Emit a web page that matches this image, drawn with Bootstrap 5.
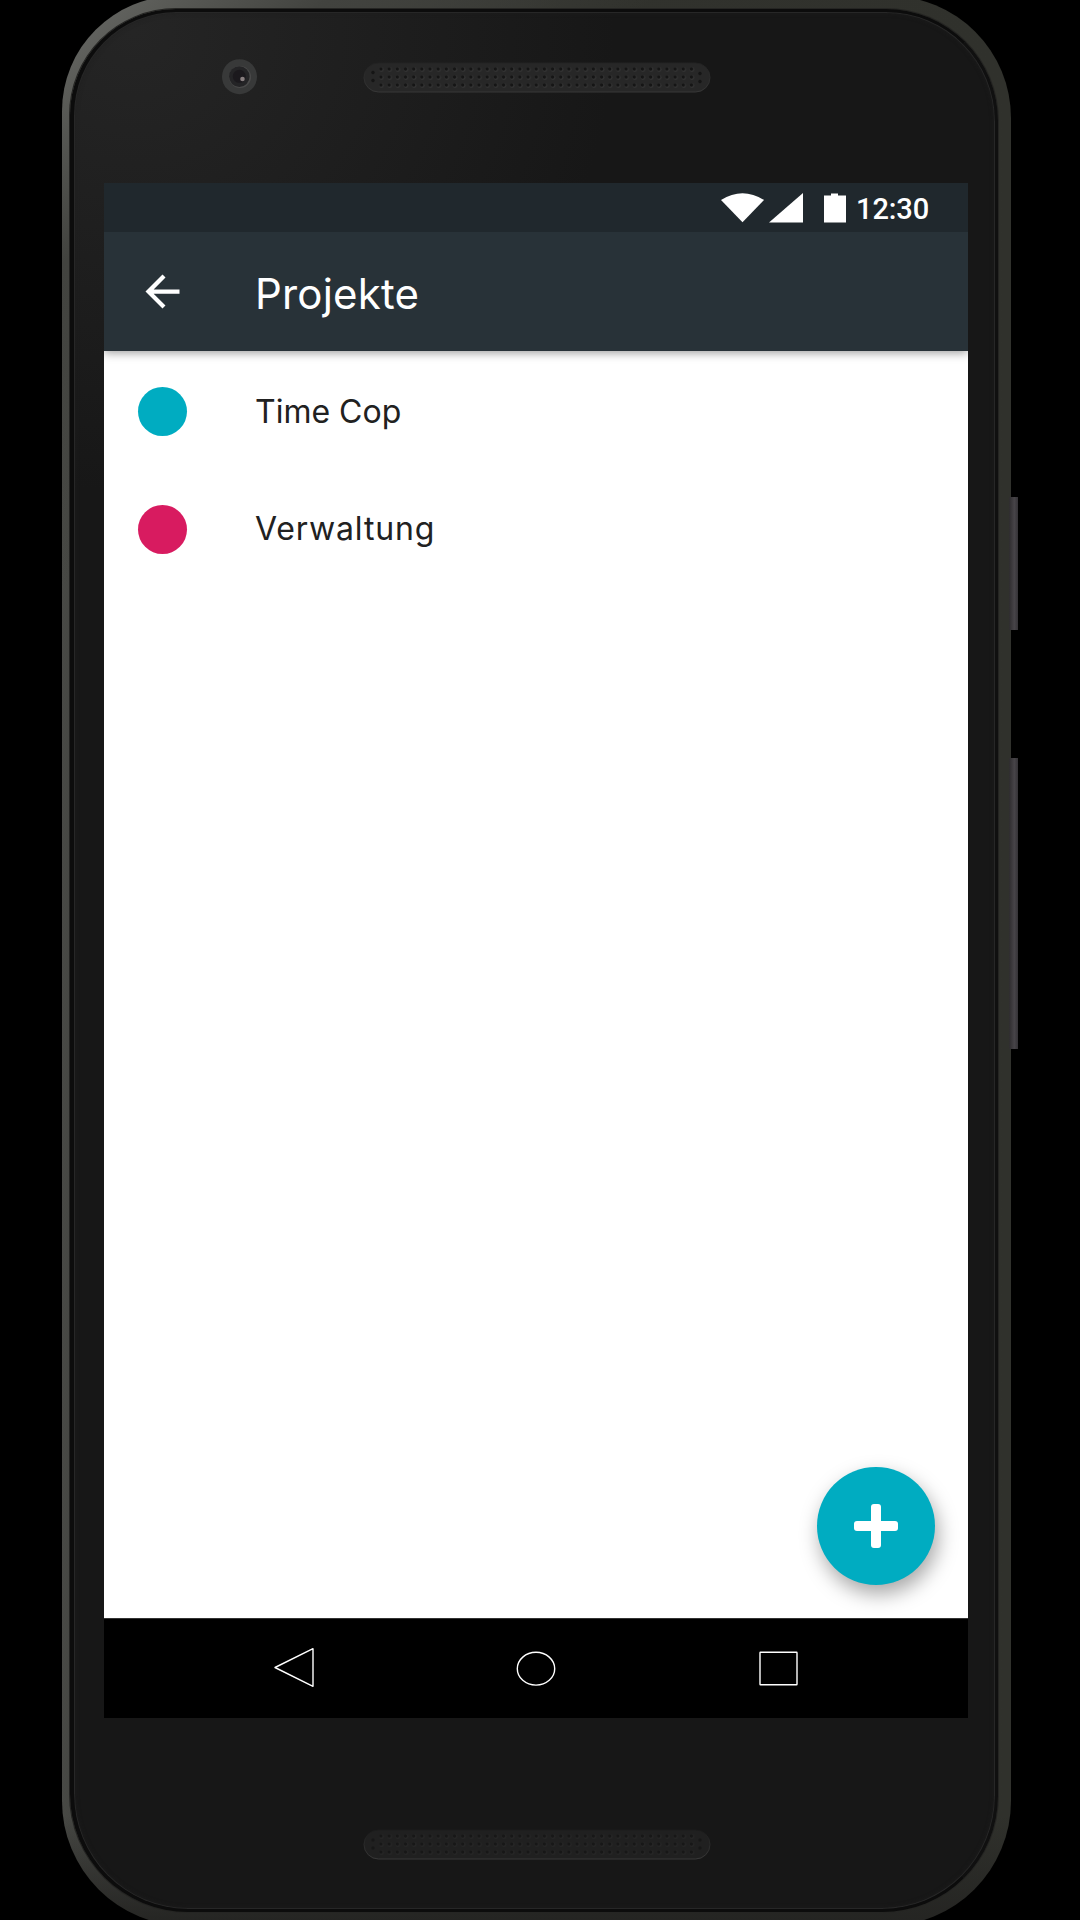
<!DOCTYPE html>
<html lang="de">
<head>
<meta charset="utf-8">
<meta name="viewport" content="width=device-width, initial-scale=1">
<title>Projekte</title>
<link href="https://cdn.jsdelivr.net/npm/bootstrap@5.3.0/dist/css/bootstrap.min.css" rel="stylesheet">
<style>
  body { background: #000; font-family: Inter, "Open Sans", sans-serif; }
  .stage { width: 1080px; height: 1920px; background: #000; }
  .phone {
    width: 949px; height: 1930px; margin: -4px 0 0 62px; padding: 13px 13px 14px 8px;
    border-radius: 115px 122px 125px 125px;
    background: linear-gradient(135deg, #6b6c69 0, #5a5b57 75px, #42433f 190px, rgba(66,67,63,0) 420px),
      linear-gradient(to top, #242422 0, rgba(50,50,48,0) 110px),
      linear-gradient(90deg, #484945 0, #464743 8px, #31322d 500px, #30312c 100%);
  }
  .bezel {
    border: 3px solid #0c0c0c; border-right-color: #101010; border-width: 3px 3px 3px 4px;
    border-radius: 106px 112px 116px 118px;
    background: radial-gradient(ellipse 480px 460px at 60px 20px, #252525, #171717);
    box-shadow: inset 0 0 0 1px #272727, inset 0 0 5px #1f1f1f, 0 0 0 1px #252523;
    padding: 171px 26px 0 30px;
  }
  .hwkey { left: 1009px; width: 9px; background: linear-gradient(90deg, #2e2c2e, #474448 60%, #343236); }
  .key-power { top: 497px; height: 133px; }
  .key-volume { top: 758px; height: 291px; }
  .camera { left: 222px; top: 59px; }
  .grille { left: 363px; }
  .grille-top { top: 62px; }
  .grille-bottom { top: 1829px; }
  .screen { width: 864px; height: 1535px; background: #fff; }
  .statusbar { height: 49px; background: #20282d; padding: 0 40px 0 616px; color: #fff; z-index: 2; }
  .clock { font: 500 29px/49px Roboto, sans-serif; width: 72px; letter-spacing: -.1px; margin-left: 8px; padding-top: 4px; }
  .appbar { height: 119px; background: #283238; color: #fff; box-shadow: 0 2px 9px rgba(0,0,0,.38); padding-left: 33px; z-index: 1; }
  .title { font-size: 42px; line-height: 50px; font-weight: 400; margin: 4px 0 0 67px; letter-spacing: .2px; }
  .content { padding-top: 2px; }
  .project { height: 117.5px; padding-left: 34px; color: #212121; font-size: 32px; line-height: 40px; }
  .dot { width: 49px; height: 49px; margin-right: 68px; }
  .wide { letter-spacing: .85px; }
  .teal { background: #00acc1; }
  .pink { background: #d81b60; }
  .fab { right: 33px; bottom: 33px; width: 118px; height: 118px; box-shadow: 3px 9px 20px rgba(0,0,0,.35); }
  .navkeys { height: 100px; background: #000; border-top: 1px solid #333; z-index: 1; }
</style>
</head>
<body>
<div class="stage position-relative overflow-hidden d-flex align-items-start">
  <div class="hwkey key-power position-absolute"></div>
  <div class="hwkey key-volume position-absolute"></div>

  <div class="phone d-flex flex-shrink-0">
    <div class="bezel flex-grow-1 d-flex align-items-start">
      <main class="screen d-flex flex-column flex-shrink-0 overflow-hidden">
        <div class="statusbar d-flex align-items-center flex-shrink-0 position-relative">
          <svg width="128" height="49" viewBox="0 0 128 49" fill="#fff" class="flex-shrink-0">
            <path d="M1 17Q22.500 3.500 44 17L22.500 39.300Z"/>
            <path d="M49 39.500L83 10V39.500Z"/>
            <path d="M104 12.500h7V10.500h7v2h8V39.500h-22Z"/>
          </svg>
          <span class="clock text-nowrap">12:30</span>
        </div>
        <header class="appbar d-flex align-items-center position-relative flex-shrink-0">
          <svg width="51" height="51" viewBox="0 0 24 24" fill="#fff" class="flex-shrink-0"><path d="M20 11H7.830l5.590-5.590L12 4l-8 8 8 8 1.410-1.410L7.830 13H20v-2z"/></svg>
          <h1 class="title">Projekte</h1>
        </header>
        <section class="content flex-grow-1 position-relative">
          <ul class="list-unstyled mb-0">
            <li class="project d-flex align-items-center"><span class="dot teal rounded-circle"></span><span>Time Cop</span></li>
            <li class="project d-flex align-items-center"><span class="dot pink rounded-circle"></span><span class="wide">Verwaltung</span></li>
          </ul>
          <button class="fab teal btn border-0 rounded-circle p-0 position-absolute d-flex align-items-center justify-content-center" aria-label="Hinzufügen">
            <svg width="44" height="44" viewBox="0 0 44 44" fill="#fff"><rect x="17" width="10" height="44" rx="3"/><rect y="17" width="44" height="10" rx="3"/></svg>
          </button>
        </section>
        <nav class="navkeys flex-shrink-0 position-relative">
          <svg width="864" height="99" viewBox="0 0 864 99" fill="none" stroke="#fff" stroke-width="1.400" stroke-linejoin="round" class="d-block">
            <path d="M171 48.500L209 29.700V67.300Z"/>
            <ellipse cx="432" cy="49.700" rx="18.700" ry="16.400"/>
            <rect x="656" y="33.300" width="37" height="32.500" rx=".5"/>
          </svg>
        </nav>
      </main>
    </div>
  </div>

  <svg class="camera position-absolute" width="36" height="36" viewBox="0 0 36 36">
    <circle cx="17.500" cy="17.700" r="17.500" fill="#383939"/>
    <circle cx="18" cy="18" r="11" fill="#4a4a4a"/>
    <circle cx="17.300" cy="17.600" r="10.300" fill="#242426"/>
    <circle cx="17.300" cy="17.300" r="6.500" fill="#1b191d"/>
    <circle cx="20.500" cy="20" r="2.300" fill="#887f80"/>
  </svg>

  <svg class="grille grille-top position-absolute" width="348" height="32" viewBox="0 0 348 32">
    <defs>
      <pattern id="holes" x="13.900" y="3" width="8.170" height="8" patternUnits="userSpaceOnUse">
        <circle cx="4.600" cy="4.600" r="2.300" fill="#333"/><circle cx="4.085" cy="4" r="1.700" fill="#151515"/>
      </pattern>
      <linearGradient id="lip" x1="0" y1="0" x2="0" y2="1"><stop offset="0" stop-color="#222"/><stop offset="1" stop-color="#373737"/></linearGradient>
    </defs>
    <rect x="1" y="1" width="346" height="29" rx="14.500" fill="#272727" stroke="url(#lip)"/>
    <rect x="13.900" y="3" width="318.600" height="24" fill="url(#holes)"/>
    <g fill="#151515"><circle cx="10" cy="10.500" r="1.700"/><circle cx="10" cy="18.500" r="1.700"/><circle cx="337" cy="11.500" r="1.700"/><circle cx="337" cy="19.500" r="1.700"/></g>
  </svg>
  <svg class="grille grille-bottom position-absolute" width="348" height="32" viewBox="0 0 348 32">
    <defs>
      <pattern id="holes-dim" x="13.900" y="3" width="8.170" height="8" patternUnits="userSpaceOnUse">
        <circle cx="4.600" cy="4.600" r="2.300" fill="#262626"/><circle cx="4.085" cy="4" r="1.700" fill="#171717"/>
      </pattern>
      <linearGradient id="lip-dim" x1="0" y1="0" x2="0" y2="1"><stop offset="0" stop-color="#1b1b1b"/><stop offset="1" stop-color="#393939"/></linearGradient>
    </defs>
    <rect x="1" y="1" width="346" height="29" rx="14.500" fill="#202020" stroke="url(#lip-dim)"/>
    <rect x="13.900" y="3" width="318.600" height="24" fill="url(#holes-dim)"/>
    <g fill="#171717"><circle cx="10" cy="11" r="1.700"/><circle cx="10" cy="19" r="1.700"/><circle cx="337" cy="11" r="1.700"/><circle cx="337" cy="19" r="1.700"/></g>
  </svg>
</div>
<script src="https://cdn.jsdelivr.net/npm/bootstrap@5.3.0/dist/js/bootstrap.bundle.min.js"></script>
</body>
</html>
